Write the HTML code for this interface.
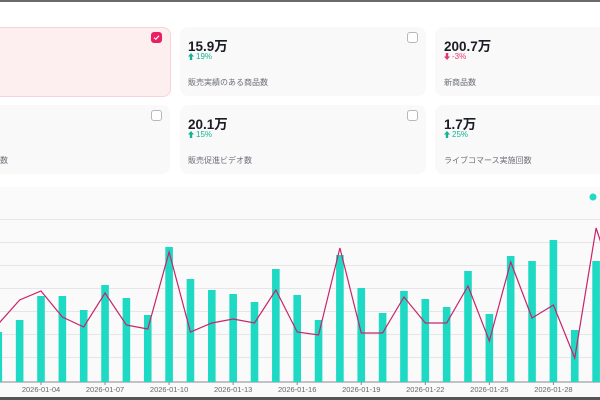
<!DOCTYPE html>
<html><head><meta charset="utf-8"><style>
*{margin:0;padding:0;box-sizing:border-box}
body{width:600px;height:400px;overflow:hidden;background:#fff;position:relative;font-family:"Liberation Sans","Noto Sans CJK JP",sans-serif}
.top{position:absolute;left:0;top:0;width:600px;height:2px;background:#6b6b6b}
.bot{position:absolute;left:0;top:397px;width:600px;height:3px;background:#555}
.card{position:absolute;background:#f9f9fa;border-radius:8px}
.card.sel{background:#fdeff0;border:1px solid #f6d3d7}
.cb{position:absolute;width:11px;height:11px;border:1px solid #b8b8bc;border-radius:3px;background:#fff}
.cb.on{background:#ea1f63;border-color:#ea1f63}
.v{position:absolute;font-size:13.5px;font-weight:bold;color:#1b1d24}
.p{position:absolute;font-size:8px}
.p svg{vertical-align:-1px;margin-right:2px}
.g{color:#15b391}.r{color:#e8356e}
.l{position:absolute;font-size:8px;color:#6b6f78}
</style></head><body>
<div class="top"></div>
<div class="card sel" style="left:-10px;top:27px;width:181px;height:70px"></div>
<div class="cb on" style="left:151px;top:32px"><svg width="9" height="9" viewBox="0 0 9 9" style="position:absolute;left:0;top:0"><path d="M2 4.6L3.8 6.3L7 2.8" stroke="#fff" stroke-width="1.1" fill="none"/></svg></div>
<div class="card" style="left:180px;top:27px;width:246px;height:69px"></div>
<div class="cb" style="left:407px;top:32px"></div>
<div class="v" style="left:188px;top:35px">15.9万</div>
<div class="p g" style="left:188px;top:52px"><svg width="6" height="7" viewBox="0 0 6 7"><path d="M3 0L6 3.5H4.2V7H1.8V3.5H0Z" fill="#15b391"/></svg>19%</div>
<div class="l" style="left:188px;top:77px">販売実績のある商品数</div>
<div class="card" style="left:435px;top:27px;width:175px;height:69px"></div>
<div class="v" style="left:444px;top:35px">200.7万</div>
<div class="p r" style="left:444px;top:52px"><svg width="6" height="7" viewBox="0 0 6 7"><path d="M3 7L6 3.5H4.2V0H1.8V3.5H0Z" fill="#e8356e"/></svg>-3%</div>
<div class="l" style="left:444px;top:77px">新商品数</div>

<div class="card" style="left:-10px;top:105px;width:180px;height:69px"></div>
<div class="cb" style="left:151px;top:110px"></div>
<div class="l" style="left:0px;top:155px">数</div>
<div class="card" style="left:180px;top:105px;width:246px;height:69px"></div>
<div class="cb" style="left:407px;top:110px"></div>
<div class="v" style="left:188px;top:113px">20.1万</div>
<div class="p g" style="left:188px;top:130px"><svg width="6" height="7" viewBox="0 0 6 7"><path d="M3 0L6 3.5H4.2V7H1.8V3.5H0Z" fill="#15b391"/></svg>15%</div>
<div class="l" style="left:188px;top:155px">販売促進ビデオ数</div>
<div class="card" style="left:435px;top:105px;width:175px;height:69px"></div>
<div class="v" style="left:444px;top:113px">1.7万</div>
<div class="p g" style="left:444px;top:130px"><svg width="6" height="7" viewBox="0 0 6 7"><path d="M3 0L6 3.5H4.2V7H1.8V3.5H0Z" fill="#15b391"/></svg>25%</div>
<div class="l" style="left:444px;top:155px">ライブコマース実施回数</div>

<div style="position:absolute;left:0;top:187px;width:600px;height:210px;background:#fafafa"></div>
<svg style="position:absolute;left:0;top:0" width="600" height="400" viewBox="0 0 600 400">
<g stroke="#e6e6e8" stroke-width="1">
<line x1="0" y1="219.5" x2="600" y2="219.5"/><line x1="0" y1="242.5" x2="600" y2="242.5"/>
<line x1="0" y1="265.5" x2="600" y2="265.5"/><line x1="0" y1="288.5" x2="600" y2="288.5"/>
<line x1="0" y1="311.5" x2="600" y2="311.5"/><line x1="0" y1="334.5" x2="600" y2="334.5"/>
<line x1="0" y1="357.5" x2="600" y2="357.5"/>
</g>
<line x1="0" y1="382" x2="600" y2="382" stroke="#8a8a8e" stroke-width="1"/>
<circle cx="593" cy="197" r="3.5" fill="#1ed9c3"/>
<g id="bars" fill="#1ed9c3"></g>
<polyline id="ln" fill="none" stroke="#c8246a" stroke-width="1.2"/>
<g id="lab" font-size="7.5" fill="#666" text-anchor="middle" font-family="Liberation Sans, sans-serif"></g>
</svg>
<div class="bot"></div>
<script>
var tops={2:332,3:320,4:296,5:296,6:310,7:285,8:298,9:315,10:247,11:279,12:290,13:294,14:302,15:269,16:295,17:320,18:255,19:288,20:313,21:291,22:299,23:307,24:271,25:314,26:256,27:261,28:240,29:330,30:261};
var line={2:324,3:300,4:291,5:317,6:327,7:293,8:325,9:329,10:252,11:332,12:323,13:319,14:323,15:290,16:332,17:335,18:248,19:333,20:333,21:297,22:323,23:323,24:286,25:341,26:262,27:318,28:305,29:358,30:228};
var ns="http://www.w3.org/2000/svg",b=document.getElementById('bars'),pts=[],lb=document.getElementById('lab');
for(var k=2;k<=30;k++){var c=41+21.35*(k-4);var r=document.createElementNS(ns,'rect');r.setAttribute('x',c-3.8);r.setAttribute('y',tops[k]);r.setAttribute('width',7.6);r.setAttribute('height',382-tops[k]);b.appendChild(r);pts.push(c+','+line[k]);
if((k-4)%3==0){var t=document.createElementNS(ns,'text');t.setAttribute('x',c);t.setAttribute('y',392);t.textContent='2026-01-'+(k<10?'0'+k:k);lb.appendChild(t);var tk=document.createElementNS(ns,'line');tk.setAttribute('x1',c);tk.setAttribute('x2',c);tk.setAttribute('y1',382);tk.setAttribute('y2',385);tk.setAttribute('stroke','#8a8a8e');lb.appendChild(tk);}}
pts.push('605,255');
document.getElementById('ln').setAttribute('points',pts.join(' '));
</script>
</body></html>
